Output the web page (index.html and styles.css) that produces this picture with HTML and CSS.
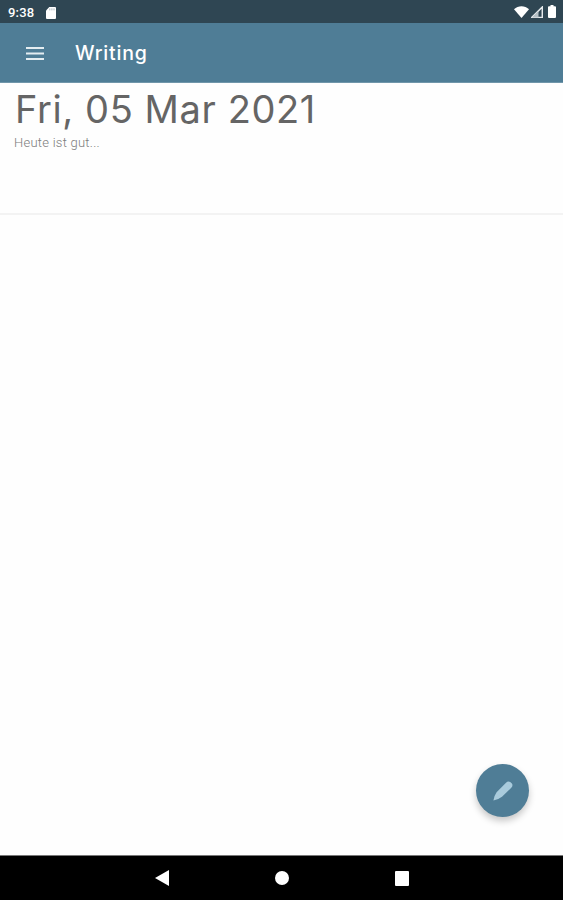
FILE: index.html
```html
<!DOCTYPE html>
<html lang="en">
<head>
  <meta charset="UTF-8" />
  <meta name="viewport" content="width=device-width, initial-scale=1.0"/>
  <title>Writing</title>
  <link rel="stylesheet" href="styles.css">
</head>
<body>
  <!-- Status bar -->
  <div class="status-bar">
    <span class="time">9:38</span>
    <svg class="sd-icon" width="10" height="12" viewBox="0 0 10 12"><path d="M3.3 0H9a1 1 0 0 1 1 1v10a1 1 0 0 1-1 1H1a1 1 0 0 1-1-1V3.4z" fill="#fff"/><path d="M3.8 1.4v2M5.9 1.4v2M8 1.4v2" stroke="#9aa8b0" stroke-width=".8"/></svg>
    <div class="system-icons">
      <svg width="15" height="12" viewBox="0 0 15 12"><path d="M0 3.2C4.2-.9 10.8-.9 15 3.2L7.5 12z" fill="#fff"/></svg>
      <svg width="12" height="12" viewBox="0 0 12 12"><path d="M.9 11.4L11.3 1v10.4z" fill="none" stroke="#e6eaed" stroke-width="1.5"/><path d="M1 11.5l6.500-6.500v6.500z" fill="#b5c0c6"/></svg>
      <svg class="battery" width="8" height="13" viewBox="0 0 8 13"><path d="M2.5 0h3v1.3H7a1 1 0 0 1 1 1V12a1 1 0 0 1-1 1H1a1 1 0 0 1-1-1V2.300a1 1 0 0 1 1-1h1.500z" fill="#fff"/></svg>
    </div>
  </div>

  <!-- App bar -->
  <header class="app-bar">
    <svg width="18" height="13" viewBox="0 0 18 13"><path d="M0 1h18M0 6.500h18M0 12h18" stroke="#e4edf1" stroke-width="1.9"/></svg>
    <h1>Writing</h1>
  </header>

  <!-- Entries -->
  <main class="entries">
    <article class="entry">
      <h2>Fri, 05 Mar 2021</h2>
      <p>Heute ist gut...</p>
    </article>
    <button class="fab" aria-label="New entry">
      <svg width="20" height="20" viewBox="0 0 20 20"><path d="M.4 19.400Q1.200 14.500 3.600 11.200L13 1.800Q15-.3 17.200 1L18.900 2.600Q20.200 4.600 18.500 6.600L9 15.800Q5.600 18.600.4 19.400z" fill="#a9cbdc"/></svg>
    </button>
  </main>

  <!-- Navigation bar -->
  <nav class="nav-bar">
    <svg width="14" height="16" viewBox="0 0 14 16"><path d="M14 0v16L0 8z" fill="#fff"/></svg>
    <svg width="14" height="14" viewBox="0 0 14 14"><circle cx="7" cy="7" r="7" fill="#fff"/></svg>
    <svg width="14" height="15" viewBox="0 0 14 15"><rect width="14" height="15" rx="1" fill="#fff"/></svg>
  </nav>
</body>
</html>
```
FILE: styles.css
```css
* { box-sizing: border-box; margin: 0; padding: 0; }
body {
  height: 100vh;
  display: flex;
  flex-direction: column;
  background: #fefefe;
  font-family: Inter, sans-serif;
  overflow: hidden;
}

svg { display: block; flex: none; }

.status-bar {
  height: 23px;
  display: flex;
  align-items: center;
  padding: 0 7px 0 8px;
  background: #2f4653;
  color: #fff;
}

.time {
  width: 38px;
  padding-top: 1px;
  font-family: Roboto, sans-serif;
  font-size: 13px;
  font-weight: 500;
  letter-spacing: 0.2px;
}

.sd-icon { margin-top: 2px; }

.system-icons {
  margin-left: auto;
  display: flex;
  align-items: center;
  gap: 2px;
}

.battery { margin-left: 3px; }

.app-bar {
  height: 60px;
  display: flex;
  align-items: center;
  gap: 31px;
  padding: 1px 26px 0;
  background: #4f7d96;
  border-bottom: 1px solid #7096aa;
}

.app-bar h1 {
  color: #fff;
  font-size: 19.5px;
  font-weight: 500;
  letter-spacing: 0.8px;
}

.entries {
  flex: 1;
  position: relative;
}

.entry {
  height: 132px;
  padding: 3px 14px 0;
  border-bottom: 2px solid #f3f3f3;
}

.entry h2 {
  padding-left: 1px;
  color: #656565;
  font-size: 38px;
  font-weight: 400;
  line-height: 47px;
  letter-spacing: 0.6px;
  white-space: nowrap;
}

.entry p {
  padding-top: 1px;
  color: #7c7c7c;
  font-family: Roboto, sans-serif;
  font-size: 13px;
  font-weight: 300;
  line-height: 18px;
  letter-spacing: 0.25px;
}

.fab {
  position: absolute;
  right: 34px;
  bottom: 38px;
  width: 53px;
  height: 53px;
  display: flex;
  align-items: center;
  justify-content: center;
  border: none;
  border-radius: 50%;
  background: #4f7d96;
  box-shadow: 0 4px 7px rgba(0, 0, 0, 0.22);
}

.nav-bar {
  height: 45px;
  display: flex;
  align-items: center;
  justify-content: center;
  gap: 106px;
  background: #000;
  border-top: 1px solid #777;
}
```
